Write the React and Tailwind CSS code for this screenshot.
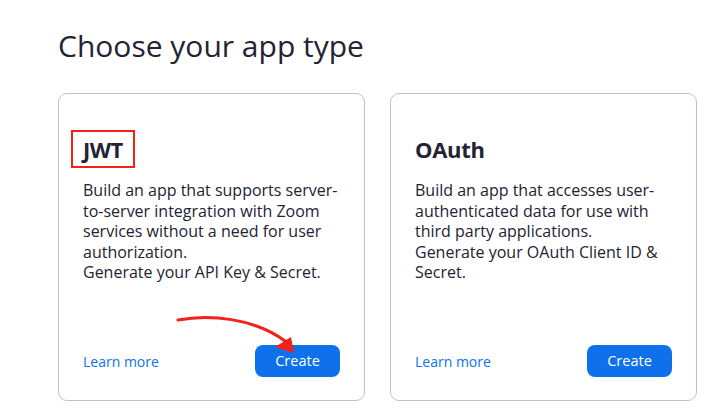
export default function App() {
  const cards = [
    {
      title: 'JWT',
      lines: ['Build an app that supports server-', 'to-server integration with Zoom', 'services without a need for user', 'authorization.', 'Generate your API Key & Secret.'],
      marked: true,
    },
    {
      title: 'OAuth',
      lines: ['Build an app that accesses user-', 'authenticated data for use with', 'third party applications.', 'Generate your OAuth Client ID &', 'Secret.'],
      marked: false,
    },
  ];

  return (
    <div className="w-[714px] h-[416px] bg-white overflow-hidden text-[#232333]" style={{ fontFamily: '"Open Sans", sans-serif' }}>
      <div className="pl-[58px] pt-[26px]">
        <h1 className="text-[30px] leading-[40px] font-normal">Choose your app type</h1>
        <div className="flex gap-[25px] mt-[27px]">
          {cards.map((card) => (
            <div key={card.title} className="relative w-[307px] h-[308px] border border-[#c1c1d1] rounded-[9px] flex flex-col px-[24px] pb-[23px]">
              <div className="mt-[36px] h-[38px] flex items-center">
                {card.marked ? (
                  <span className="-ml-[12px] border-2 border-[#f2211a] px-[10px] h-[38px] flex items-center text-[22px] font-bold tracking-[-0.5px]">
                    {card.title}
                  </span>
                ) : (
                  <span className="text-[22px] font-bold tracking-[-0.3px]">{card.title}</span>
                )}
              </div>
              <p className="mt-[12px] text-[16px] leading-[20.5px]">
                {card.lines.map((l, i) => (
                  <span key={i} className="block whitespace-nowrap">{l}</span>
                ))}
              </p>
              <div className="mt-auto flex items-center justify-between">
                <a className="text-[14px] text-[#0e72ed]">Learn more</a>
                <button className="w-[85px] h-[32px] rounded-[8px] bg-[#0e71eb] text-white text-[14.5px]">Create</button>
              </div>
              {card.marked && (
                <svg className="absolute left-[110px] top-[216px]" width="130" height="50" viewBox="0 0 130 50">
                  <path d="M9 10 C 40 4, 85 8, 116 31" fill="none" stroke="#f2211a" strokeWidth="3" strokeLinecap="round" />
                  <polygon points="106,37 122,27 125,43" fill="#f2211a" />
                </svg>
              )}
            </div>
          ))}
        </div>
      </div>
    </div>
  );
}
